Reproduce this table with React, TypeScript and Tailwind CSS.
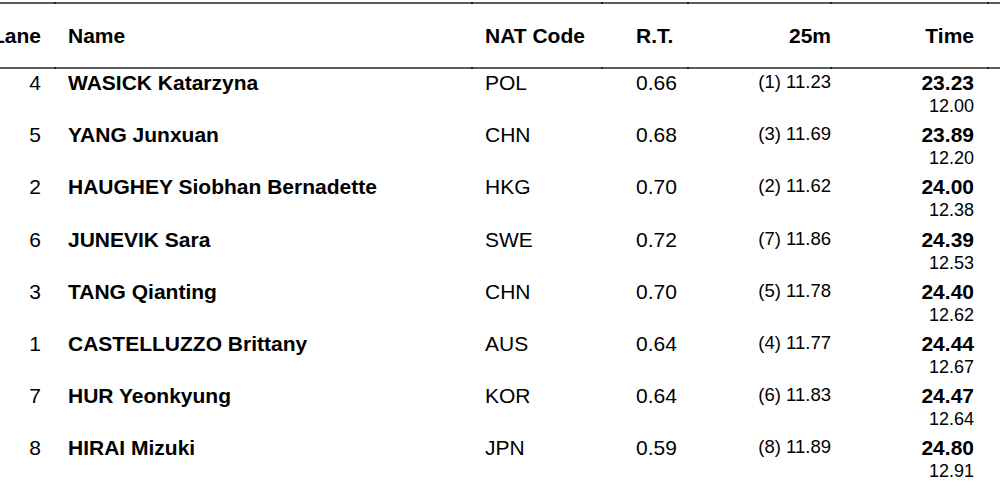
import React from "react";

type Row = {
  lane: number;
  name: string;
  nat: string;
  rt: string;
  split: string;
  time: string;
  second: string;
};

const rows: Row[] = [
  { lane: 4, name: "WASICK Katarzyna", nat: "POL", rt: "0.66", split: "(1) 11.23", time: "23.23", second: "12.00" },
  { lane: 5, name: "YANG Junxuan", nat: "CHN", rt: "0.68", split: "(3) 11.69", time: "23.89", second: "12.20" },
  { lane: 2, name: "HAUGHEY Siobhan Bernadette", nat: "HKG", rt: "0.70", split: "(2) 11.62", time: "24.00", second: "12.38" },
  { lane: 6, name: "JUNEVIK Sara", nat: "SWE", rt: "0.72", split: "(7) 11.86", time: "24.39", second: "12.53" },
  { lane: 3, name: "TANG Qianting", nat: "CHN", rt: "0.70", split: "(5) 11.78", time: "24.40", second: "12.62" },
  { lane: 1, name: "CASTELLUZZO Brittany", nat: "AUS", rt: "0.64", split: "(4) 11.77", time: "24.44", second: "12.67" },
  { lane: 7, name: "HUR Yeonkyung", nat: "KOR", rt: "0.64", split: "(6) 11.83", time: "24.47", second: "12.64" },
  { lane: 8, name: "HIRAI Mizuki", nat: "JPN", rt: "0.59", split: "(8) 11.89", time: "24.80", second: "12.91" },
];

// column grid: lane | name | nat | rt | 25m | time | rest
const cols = "grid grid-cols-[55px_417px_130px_86px_143px_157px_12px]";

// horizontal rule with small darker marks at the column boundaries
function Rule() {
  return (
    <div className="flex h-[2px] w-full">
      <div className="w-[54px] bg-[#5c5c5c]" />
      <div className="w-[2px] bg-[#1e1e1e]" />
      <div className="w-[415px] bg-[#5c5c5c]" />
      <div className="w-[2px] bg-[#1e1e1e]" />
      <div className="w-[128px] bg-[#5c5c5c]" />
      <div className="w-[2px] bg-[#1e1e1e]" />
      <div className="w-[84px] bg-[#5c5c5c]" />
      <div className="w-[2px] bg-[#1e1e1e]" />
      <div className="w-[141px] bg-[#5c5c5c]" />
      <div className="w-[2px] bg-[#1e1e1e]" />
      <div className="w-[155px] bg-[#5c5c5c]" />
      <div className="w-[2px] bg-[#1e1e1e]" />
      <div className="flex-1 bg-[#5c5c5c]" />
    </div>
  );
}

export default function App() {
  return (
    <div className="w-[1000px] h-[482px] overflow-hidden bg-white pt-[2px] text-black font-['Liberation_Sans',Arial,sans-serif]">
      <Rule />

      {/* Header */}
      <div className={`${cols} h-[63px] items-center text-[21px] leading-[24px] font-bold`}>
        <div className="flex justify-end pr-[14px] whitespace-nowrap">Lane</div>
        <div className="pl-[13px]">Name</div>
        <div className="pl-[13px]">NAT Code</div>
        <div className="pl-[34px]">R.T.</div>
        <div className="text-right">25m</div>
        <div className="text-right pr-[14px]">Time</div>
        <div />
      </div>

      <Rule />

      {/* Results */}
      <div className="pt-[2px]">
        {rows.map((r) => (
          <div key={r.lane} className={`${cols} h-[52.2px] items-start`}>
            <div className="text-right pr-[14px] text-[21px] leading-[24px]">{r.lane}</div>
            <div className="pl-[13px] text-[21px] leading-[24px] font-bold whitespace-nowrap">{r.name}</div>
            <div className="pl-[13px] text-[21px] leading-[24px]">{r.nat}</div>
            <div className="pl-[34px] text-[21px] leading-[24px]">{r.rt}</div>
            <div className="text-right text-[18.5px] leading-[22px]">{r.split}</div>
            <div className="flex flex-col items-end pr-[14px]">
              <span className="text-[21px] leading-[24px] font-bold">{r.time}</span>
              <span className="text-[18px] leading-[22px]">{r.second}</span>
            </div>
            <div />
          </div>
        ))}
      </div>
    </div>
  );
}
